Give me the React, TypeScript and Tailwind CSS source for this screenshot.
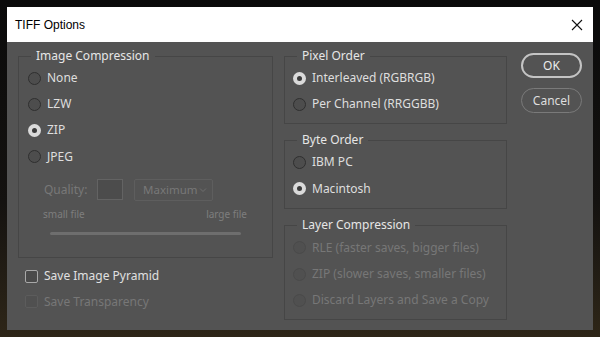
import React from "react"

const font = { fontFamily: '"Noto Sans", "Open Sans", sans-serif' }

function Radio({ checked = false, disabled = false }: { checked?: boolean; disabled?: boolean }) {
  if (checked) {
    return (
      <span className="w-[13px] h-[13px] rounded-full bg-[#dadada] flex items-center justify-center shrink-0">
        <span className="w-[5px] h-[5px] rounded-full bg-[#3a3a3a]" />
      </span>
    )
  }
  return (
    <span
      className={
        disabled
          ? "w-[13px] h-[13px] rounded-full border border-[#4a4a4a] bg-[#505050] shrink-0"
          : "w-[13px] h-[13px] rounded-full border border-[#2f2f2f] bg-[#4d4d4d] shrink-0"
      }
    />
  )
}

function RadioRow({
  label,
  checked,
  disabled,
  h = "h-[26px]",
}: {
  label: string
  checked?: boolean
  disabled?: boolean
  h?: string
}) {
  return (
    <div className={`${h} flex items-center gap-[6px]`}>
      <Radio checked={checked} disabled={disabled} />
      <span className={disabled ? "text-[#777777]" : "text-[#dedede]"}>{label}</span>
    </div>
  )
}

function Group({
  title,
  className,
  children,
}: {
  title: string
  className: string
  children: React.ReactNode
}) {
  return (
    <fieldset className={`border border-[#464646] ${className}`}>
      <legend className="ml-[12px] px-[5px] leading-4 text-[#e6e6e6]">{title}</legend>
      {children}
    </fieldset>
  )
}

export default function App() {
  return (
    <div
      className="w-[600px] h-[337px] p-[7px] bg-[linear-gradient(to_bottom,#0a0a0a_0%,#141210_60%,#2e2618_100%)]"
      style={font}
    >
      <div className="w-[586px] h-[323px] flex flex-col text-[12px]">
        {/* Title bar */}
        <div className="h-[35px] bg-white flex items-center justify-between pl-[8px] pr-[10px]">
          <span className="text-black text-[12px]" style={{ fontFamily: '"Liberation Sans", Arial, sans-serif' }}>
            TIFF Options
          </span>
          <svg width="12" height="12" viewBox="0 0 12 12">
            <path d="M1 1 L11 11 M11 1 L1 11" stroke="#111" strokeWidth="1.1" />
          </svg>
        </div>

        {/* Body */}
        <div className="flex-1 bg-[#535353] flex pl-[11px] pt-[6px]">
          {/* Left column */}
          <div className="w-[255px] flex flex-col">
            <Group title="Image Compression" className="h-[210px]">
              <div className="mt-[1px] pl-[9px]">
                <RadioRow label="None" />
                <RadioRow label="LZW" />
                <RadioRow label="ZIP" checked />
                <RadioRow label="JPEG" h="h-[27px]" />
              </div>
              <div className="mt-[8px] ml-[25px] flex items-center h-[23px]">
                <span className="text-[#787878] w-[53px]">Quality:</span>
                <span className="w-[26px] h-[21px] border border-[#636363] bg-[#4c4c4c]" />
                <div className="ml-[11px] w-[79px] h-[22px] border border-[#5e5e5e] rounded-[2px] flex items-center justify-between pl-[8px] pr-[5px]">
                  <span className="text-[#787878] text-[11.5px]">Maximum</span>
                  <svg width="8" height="6" viewBox="0 0 8 6">
                    <path d="M1 1.5 L4 4.5 L7 1.5" stroke="#6e6e6e" fill="none" strokeWidth="1" />
                  </svg>
                </div>
              </div>
              <div className="mt-[7px] ml-[24px] mr-[25px] flex justify-between text-[10px] leading-3 text-[#7e7e7e]">
                <span>small file</span>
                <span>large file</span>
              </div>
              <div className="mt-[12px] ml-[31px] mr-[31px] h-[3px] rounded-full bg-[#6e6e6e]" />
            </Group>

            <div className="mt-[5px] ml-[7px]">
              <div className="h-[26px] flex items-center gap-[6px]">
                <span className="w-[13px] h-[13px] rounded-[2px] border border-[#a8a8a8] bg-[#4a4a4a]" />
                <span className="text-[#e0e0e0]">Save Image Pyramid</span>
              </div>
              <div className="h-[25px] flex items-center gap-[6px]">
                <span className="w-[13px] h-[13px] rounded-[2px] border border-[#5c5c5c] bg-[#505050]" />
                <span className="text-[#777777]">Save Transparency</span>
              </div>
            </div>
          </div>

          {/* Right column */}
          <div className="ml-[11px] w-[223px] flex flex-col gap-[8px]">
            <Group title="Pixel Order" className="h-[76px]">
              <div className="mt-[1px] pl-[8px]">
                <RadioRow label="Interleaved (RGBRGB)" checked />
                <RadioRow label="Per Channel (RRGGBB)" />
              </div>
            </Group>
            <Group title="Byte Order" className="h-[77px]">
              <div className="mt-[1px] pl-[8px]">
                <RadioRow label="IBM PC" />
                <RadioRow label="Macintosh" checked h="h-[27px]" />
              </div>
            </Group>
            <Group title="Layer Compression" className="h-[103px]">
              <div className="mt-[1px] pl-[8px]">
                <RadioRow label="RLE (faster saves, bigger files)" disabled h="h-[27px]" />
                <RadioRow label="ZIP (slower saves, smaller files)" disabled />
                <RadioRow label="Discard Layers and Save a Copy" disabled />
              </div>
            </Group>
          </div>

          {/* Buttons */}
          <div className="ml-[14px] w-[61px] pt-[5px] flex flex-col gap-[10px]">
            <button className="h-[25px] rounded-full border-2 border-[#c4c4c4] text-[#ececec] text-[12px] flex items-center justify-center">
              OK
            </button>
            <button className="h-[25px] rounded-full border border-[#7a7a7a] text-[#dedede] text-[12px] flex items-center justify-center">
              Cancel
            </button>
          </div>
        </div>
      </div>
    </div>
  )
}
